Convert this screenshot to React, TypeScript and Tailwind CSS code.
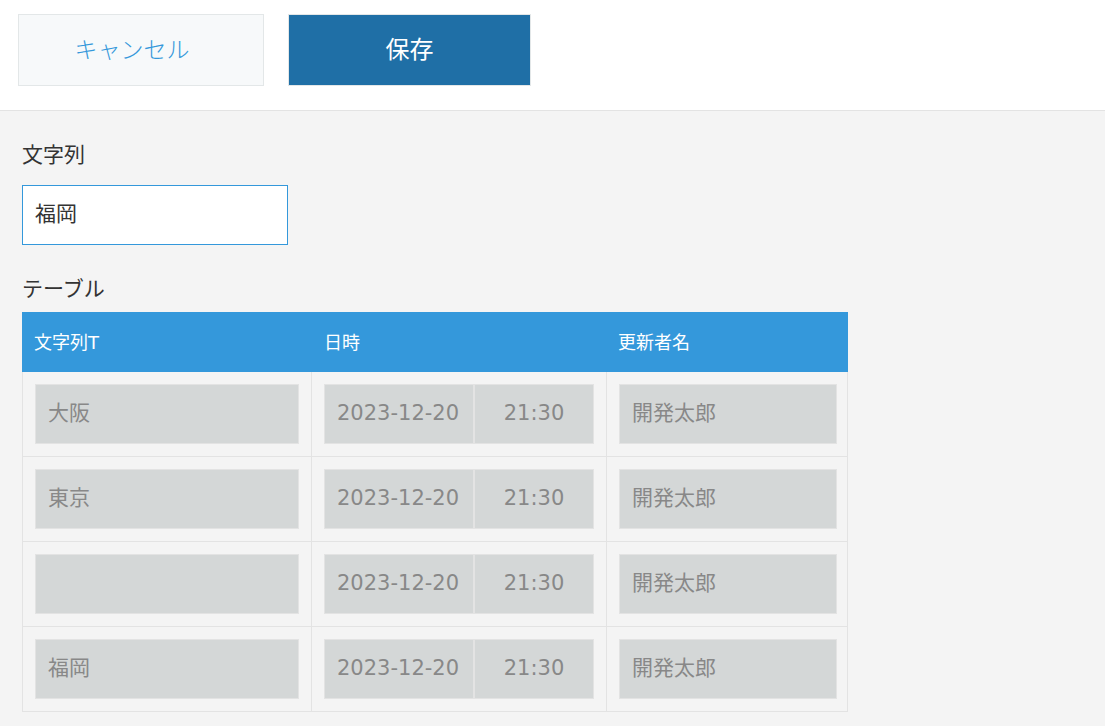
import React from 'react';

const font = { fontFamily: '"DejaVu Sans", "Noto Sans CJK JP", sans-serif' };

interface Row {
  text: string;
  date: string;
  time: string;
  user: string;
}

const rows: Row[] = [
  { text: '大阪', date: '2023-12-20', time: '21:30', user: '開発太郎' },
  { text: '東京', date: '2023-12-20', time: '21:30', user: '開発太郎' },
  { text: '', date: '2023-12-20', time: '21:30', user: '開発太郎' },
  { text: '福岡', date: '2023-12-20', time: '21:30', user: '開発太郎' },
];

function Cell({ children, className = '' }: { children?: React.ReactNode; className?: string }) {
  return (
    <div className={`h-[60px] flex items-center bg-[#d4d7d7] border border-[#e3e3e3] text-[21px] text-[#888888] ${className}`}>
      {children}
    </div>
  );
}

export default function App() {
  return (
    <div className="w-[1105px] h-[726px] bg-[#f4f4f4] overflow-hidden" style={font}>
      {/* toolbar */}
      <div className="h-[111px] bg-white border-b border-[#e3e3e3] flex gap-[24px] pl-[18px] pt-[14px]">
        <button className="w-[246px] h-[72px] bg-[#f7f9fa] border border-[#e3e7e8] text-[#3498db] text-[23px] font-light pr-[18px]">
          キャンセル
        </button>
        <button className="w-[243px] h-[72px] bg-[#1f6fa6] border border-[#e3e7e8] text-white text-[24px]">
          保存
        </button>
      </div>

      <div className="pl-[22px] pt-[30px]">
        <div className="text-[21px] text-[#333333] leading-[28px]">文字列</div>
        <div className="mt-[16px] w-[266px] h-[60px] bg-white border border-[#3498db] flex items-center pl-[12px] text-[21px] text-[#333333]">
          福岡
        </div>

        <div className="mt-[30px] text-[21px] text-[#333333] leading-[28px]">テーブル</div>

        <div className="mt-[9px] w-[826px]">
          <div className="h-[60px] bg-[#3498db] grid grid-cols-[289px_295px_242px] items-center text-white text-[18px]">
            <div className="pl-[12px]">文字列T</div>
            <div className="pl-[13px]">日時</div>
            <div className="pl-[12px]">更新者名</div>
          </div>
          {rows.map((r, i) => (
            <div
              key={i}
              className="h-[85px] grid grid-cols-[289px_295px_242px] border-l border-r border-b border-[#e3e3e3]"
            >
              <div className="border-r border-[#e3e3e3] p-[12px]">
                <Cell className="pl-[12px]">{r.text}</Cell>
              </div>
              <div className="border-r border-[#e3e3e3] p-[12px] flex">
                <Cell className="w-[150px] pl-[12px]">{r.date}</Cell>
                <Cell className="w-[120px] justify-center">{r.time}</Cell>
              </div>
              <div className="p-[12px]">
                <Cell className="pl-[12px]">{r.user}</Cell>
              </div>
            </div>
          ))}
        </div>
      </div>
    </div>
  );
}
